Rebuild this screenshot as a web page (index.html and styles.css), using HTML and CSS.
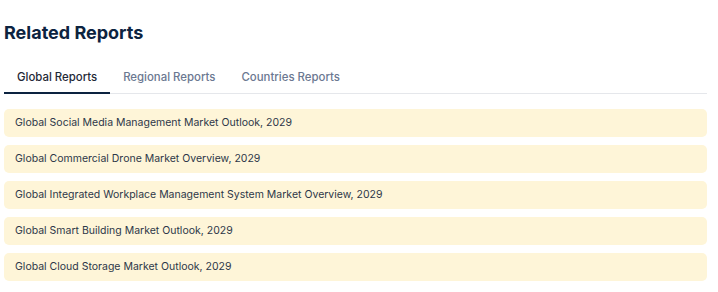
FILE: index.html
```html
<!DOCTYPE html>
<html lang="en">
<head>
    <meta charset="UTF-8">
    <meta name="viewport" content="width=device-width, initial-scale=1.0">
    <title>Related Reports</title>
    <link rel="stylesheet" href="styles.css">
</head>
<body>

    <div class="related">
        <h2>Related Reports</h2>

        <!-- Tabs -->
        <div class="tabs">
            <button class="tab active">Global Reports</button>
            <button class="tab">Regional Reports</button>
            <button class="tab">Countries Reports</button>
        </div>

        <!-- Report list -->
        <ul class="report-list">
            <li><a href="#">Global Social Media Management Market Outlook, 2029</a></li>
            <li><a href="#">Global Commercial Drone Market Overview, 2029</a></li>
            <li><a href="#">Global Integrated Workplace Management System Market Overview, 2029</a></li>
            <li><a href="#">Global Smart Building Market Outlook, 2029</a></li>
            <li><a href="#">Global Cloud Storage Market Outlook, 2029</a></li>
        </ul>
    </div>

</body>
</html>
```

FILE: styles.css
```css
body {
    margin: 0;
    font-family: Inter, "Noto Sans", sans-serif;
    background: #ffffff;
}

.related {
    width: 703px;
    padding: 0 4px;
}

h2 {
    margin: 0;
    padding-top: 21px;
    font-size: 18px;
    line-height: 23px;
    font-weight: 700;
    color: #0c2340;
}

.tabs {
    display: flex;
    margin-top: 20px;
    border-bottom: 1px solid #e5e7eb;
}

.tab {
    background: none;
    border: none;
    border-bottom: 2px solid transparent;
    margin-bottom: -1px;
    padding: 6px 13px 8px;
    font-family: inherit;
    font-size: 11.4px;
    font-weight: 500;
    color: #6b7891;
    cursor: pointer;
}

.tab.active {
    color: #1f2937;
    border-bottom-color: #0c2340;
}

.report-list {
    list-style: none;
    margin: 15px 0 0;
    padding: 0;
    display: flex;
    flex-direction: column;
    gap: 8px;
}

.report-list li {
    background: #fef5d8;
    border-radius: 5px;
}

.report-list a {
    display: block;
    padding: 0 11px;
    line-height: 28px;
    font-size: 10.5px;
    color: #2d3748;
    text-decoration: none;
}
```
